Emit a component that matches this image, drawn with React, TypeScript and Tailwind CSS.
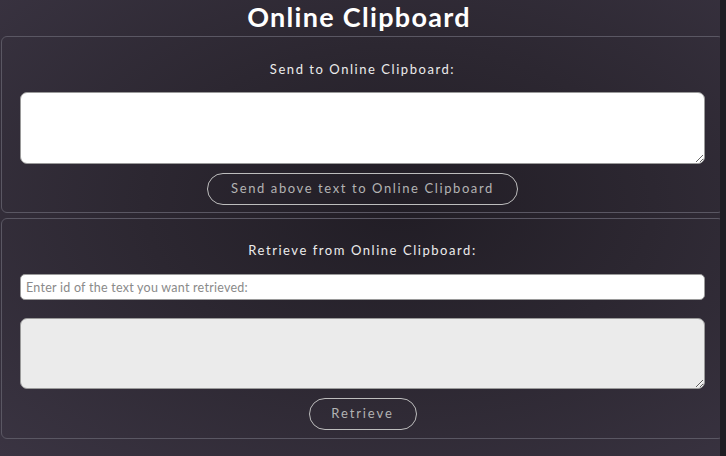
const App = () => {
  const font = { fontFamily: "Lato, 'Open Sans', sans-serif" }

  return (
    <div
      style={font}
      className="relative h-[456px] w-[726px] overflow-hidden bg-[radial-gradient(ellipse_at_55%_45%,#211d25_0%,#2c2731_45%,#3a3442_100%)]"
    >
      <h1 className="h-[36px] pr-[8px] text-center text-[27px] font-bold leading-[34px] tracking-[1.3px] text-white">
        Online Clipboard
      </h1>

      <section className="ml-px mr-[2px] flex h-[177px] flex-col items-center rounded-md border border-[#5a5763] px-[18px] pt-[22px]">
        <p className="h-[20px] text-[13px] leading-[20px] tracking-[1.55px] text-[#ececec]">
          Send to Online Clipboard:
        </p>
        <textarea className="mt-[13px] h-[72px] w-full rounded-[7px] border border-[#9a9a9a] bg-white" />
        <button className="mt-[9px] h-[32px] w-[311px] rounded-full border border-[#bdbdbd] text-[13px] tracking-[1.6px] text-[#b3b3b3]">
          Send above text to Online Clipboard
        </button>
      </section>

      <section className="ml-px mr-[2px] mt-[5px] flex h-[221px] flex-col items-center rounded-md border border-[#5a5763] px-[18px] pt-[21px]">
        <p className="h-[20px] text-[13px] leading-[20px] tracking-[1.55px] text-[#ececec]">
          Retrieve from Online Clipboard:
        </p>
        <input
          placeholder="Enter id of the text you want retrieved:"
          className="mt-[14px] h-[26px] w-full rounded-[5px] border border-[#9a9a9a] bg-white px-[5px] text-[12.5px] tracking-[0.25px] placeholder:text-[#8a8a8a]"
        />
        <textarea className="mt-[18px] h-[71px] w-full rounded-[7px] border border-[#9a9a9a] bg-[#ebebeb]" />
        <button className="mt-[9px] h-[32px] w-[108px] rounded-full border border-[#bdbdbd] text-[13px] tracking-[1.9px] text-[#b3b3b3]">
          Retrieve
        </button>
      </section>

      <div className="absolute right-0 top-0 h-full w-[6px] bg-[#1f1d22]" />
    </div>
  )
}

export default App
